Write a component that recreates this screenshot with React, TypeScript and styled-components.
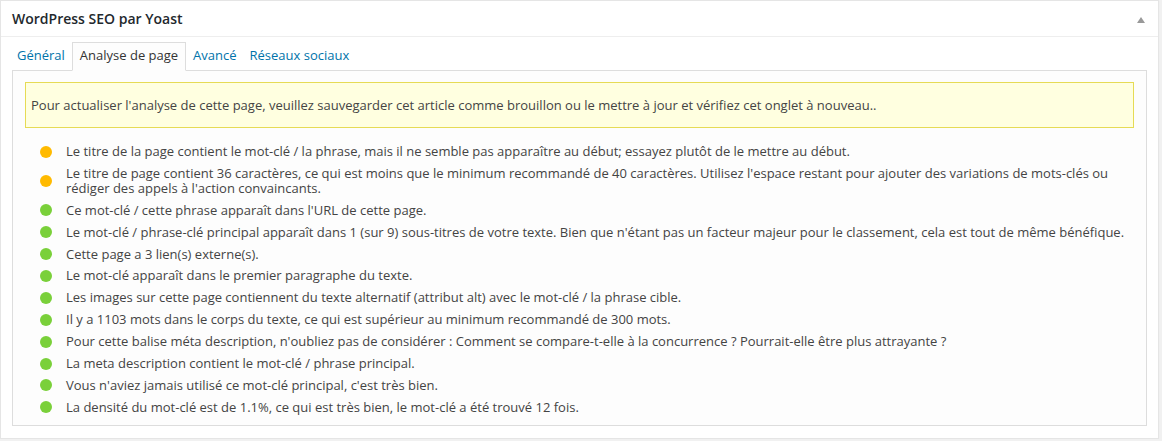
import styled, { createGlobalStyle } from "styled-components";

type Rating = "ok" | "good";

interface Result {
    rating: Rating;
    text: string;
}

const results: Result[] = [
    { rating: "ok", text: "Le titre de la page contient le mot-clé / la phrase, mais il ne semble pas apparaître au début; essayez plutôt de le mettre au début." },
    { rating: "ok", text: "Le titre de page contient 36 caractères, ce qui est moins que le minimum recommandé de 40 caractères. Utilisez l'espace restant pour ajouter des variations de mots-clés ou rédiger des appels à l'action convaincants." },
    { rating: "good", text: "Ce mot-clé / cette phrase apparaît dans l'URL de cette page." },
    { rating: "good", text: "Le mot-clé / phrase-clé principal apparaît dans 1 (sur 9) sous-titres de votre texte. Bien que n'étant pas un facteur majeur pour le classement, cela est tout de même bénéfique." },
    { rating: "good", text: "Cette page a 3 lien(s) externe(s)." },
    { rating: "good", text: "Le mot-clé apparaît dans le premier paragraphe du texte." },
    { rating: "good", text: "Les images sur cette page contiennent du texte alternatif (attribut alt) avec le mot-clé / la phrase cible." },
    { rating: "good", text: "Il y a 1103 mots dans le corps du texte, ce qui est supérieur au minimum recommandé de 300 mots." },
    { rating: "good", text: "Pour cette balise méta description, n'oubliez pas de considérer : Comment se compare-t-elle à la concurrence ? Pourrait-elle être plus attrayante ?" },
    { rating: "good", text: "La meta description contient le mot-clé / phrase principal." },
    { rating: "good", text: "Vous n'aviez jamais utilisé ce mot-clé principal, c'est très bien." },
    { rating: "good", text: "La densité du mot-clé est de 1.1%, ce qui est très bien, le mot-clé a été trouvé 12 fois." },
];

const tabs = ["Général", "Analyse de page", "Avancé", "Réseaux sociaux"];

const GlobalStyle = createGlobalStyle`
    body {
        margin: 0;
        background: #f1f1f1;
        font-family: "Open Sans", "Liberation Sans", sans-serif;
        font-size: 13px;
        color: #444;
    }
`;

const Postbox = styled.div`
    width: 1157px;
    height: 437px;
    background: #fff;
    border: 1px solid #e5e5e5;
    box-shadow: 0 1px 1px rgba(0, 0, 0, 0.04);
    display: flex;
    flex-direction: column;
`;

const Header = styled.div`
    display: flex;
    align-items: center;
    justify-content: space-between;
    height: 35px;
    padding: 0 12px 0 11px;
    border-bottom: 1px solid #eee;
`;

const Title = styled.h2`
    margin: 0;
    font-size: 14px;
    font-weight: 600;
    color: #23282d;
`;

const Toggle = styled.span`
    width: 0;
    height: 0;
    margin-right: 1px;
    margin-top: 2px;
    border-left: 4px solid transparent;
    border-right: 4px solid transparent;
    border-bottom: 6px solid #999;
`;

const Inside = styled.div`
    padding: 5px 11px 12px 11px;
    display: flex;
    flex-direction: column;
    flex: 1;
`;

const TabBar = styled.div`
    display: flex;
    gap: 1px;
    margin: 0 0 -1px -1px;
    position: relative;
    z-index: 1;
`;

const Tab = styled.a<{ active?: boolean }>`
    display: block;
    height: 27px;
    line-height: 25px;
    padding: 0 ${p => (p.active ? "7px" : "5px")};
    border: 1px solid ${p => (p.active ? "#ddd" : "transparent")};
    border-bottom: 1px solid ${p => (p.active ? "#fdfdfd" : "transparent")};
    background: ${p => (p.active ? "#fdfdfd" : "transparent")};
    color: ${p => (p.active ? "#333" : "#0073aa")};
    text-decoration: none;
    cursor: pointer;
`;

const Panel = styled.div`
    flex: 1;
    background: #fdfdfd;
    border: 1px solid #ddd;
    padding: 11px 12px 0;
`;

const Notice = styled.div`
    background: #ffffe0;
    border: 1px solid #e6db55;
    padding: 0 5px;
    height: 44px;
    display: flex;
    align-items: center;
`;

const List = styled.ul`
    list-style: none;
    margin: 16px 0 0;
    padding: 0 0 0 15px;
`;

const Item = styled.li`
    display: flex;
    align-items: center;
    line-height: 15px;
    margin-bottom: 6.9px;
`;

const Bullet = styled.span<{ rating: Rating }>`
    flex: none;
    width: 12px;
    height: 12px;
    border-radius: 50%;
    margin-right: 14px;
    background: ${p => (p.rating === "ok" ? "#ffba00" : "#7ad03a")};
`;

const App = () => {
    return (
        <>
            <GlobalStyle />
            <Postbox>
                <Header>
                    <Title>WordPress SEO par Yoast</Title>
                    <Toggle />
                </Header>
                <Inside>
                    <TabBar>
                        {tabs.map(t => (
                            <Tab key={t} active={t === "Analyse de page"}>
                                {t}
                            </Tab>
                        ))}
                    </TabBar>
                    <Panel>
                        <Notice>
                            Pour actualiser l'analyse de cette page, veuillez sauvegarder cet article comme brouillon ou le mettre à jour et vérifiez cet onglet à nouveau..
                        </Notice>
                        <List>
                            {results.map((r, i) => (
                                <Item key={i}>
                                    <Bullet rating={r.rating} />
                                    <span>{r.text}</span>
                                </Item>
                            ))}
                        </List>
                    </Panel>
                </Inside>
            </Postbox>
        </>
    );
};

export default App;
